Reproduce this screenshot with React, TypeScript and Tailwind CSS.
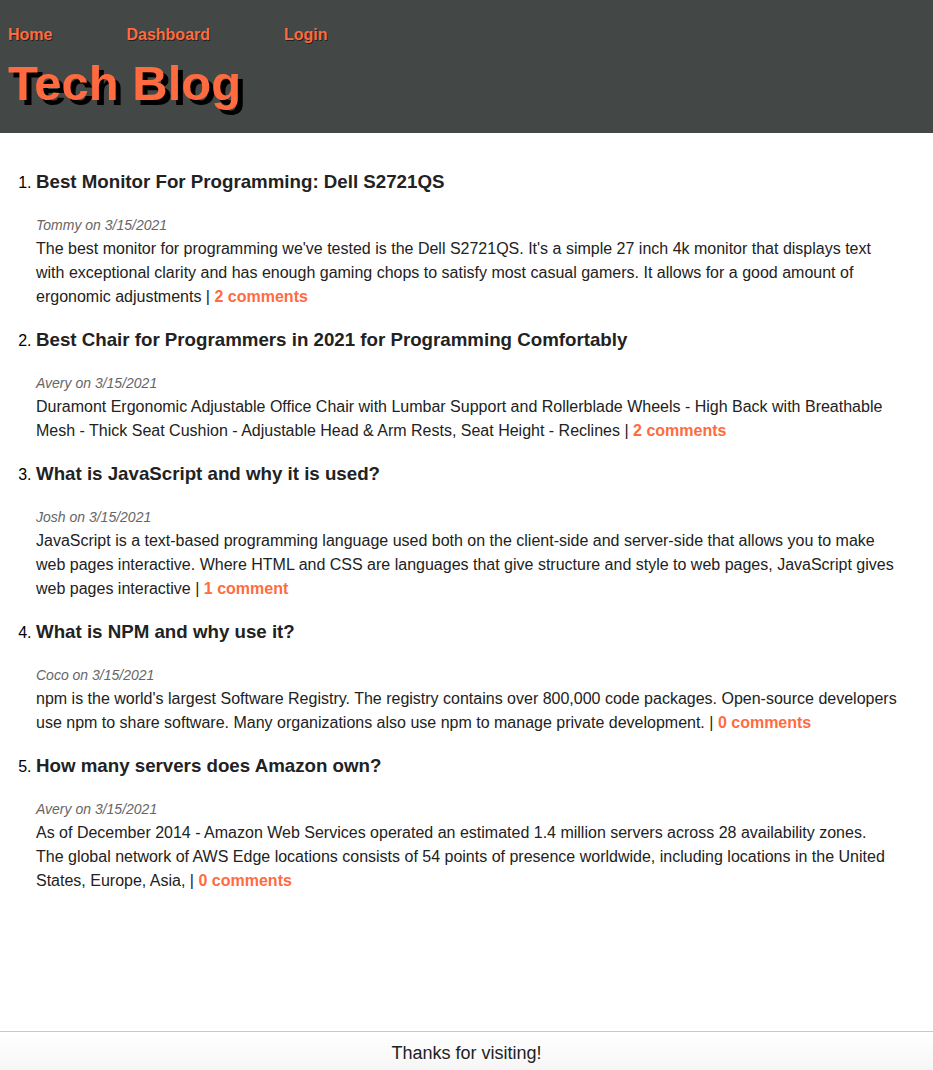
import React, { JSX } from "react";

type Post = {
  title: string;
  author: string;
  date: string;
  body: string;
  comments: number;
};

const posts: Post[] = [
  {
    title: "Best Monitor For Programming: Dell S2721QS",
    author: "Tommy",
    date: "3/15/2021",
    body: "The best monitor for programming we've tested is the Dell S2721QS. It's a simple 27 inch 4k monitor that displays text with exceptional clarity and has enough gaming chops to satisfy most casual gamers. It allows for a good amount of ergonomic adjustments",
    comments: 2,
  },
  {
    title: "Best Chair for Programmers in 2021 for Programming Comfortably",
    author: "Avery",
    date: "3/15/2021",
    body: "Duramont Ergonomic Adjustable Office Chair with Lumbar Support and Rollerblade Wheels - High Back with Breathable Mesh - Thick Seat Cushion - Adjustable Head & Arm Rests, Seat Height - Reclines",
    comments: 2,
  },
  {
    title: "What is JavaScript and why it is used?",
    author: "Josh",
    date: "3/15/2021",
    body: "JavaScript is a text-based programming language used both on the client-side and server-side that allows you to make web pages interactive. Where HTML and CSS are languages that give structure and style to web pages, JavaScript gives web pages interactive",
    comments: 1,
  },
  {
    title: "What is NPM and why use it?",
    author: "Coco",
    date: "3/15/2021",
    body: "npm is the world's largest Software Registry. The registry contains over 800,000 code packages. Open-source developers use npm to share software. Many organizations also use npm to manage private development.",
    comments: 0,
  },
  {
    title: "How many servers does Amazon own?",
    author: "Avery",
    date: "3/15/2021",
    // the reference wraps before "The"
    body: "As of December 2014 - Amazon Web Services operated an estimated 1.4 million servers across 28 availability zones.\nThe global network of AWS Edge locations consists of 54 points of presence worldwide, including locations in the United States, Europe, Asia,",
    comments: 0,
  },
];

function PostItem({ post }: { post: Post }): JSX.Element {
  return (
    <li className="mt-5 first:mt-0">
      <h3 className="text-[18.72px] leading-[22px] font-bold text-[#222] mb-[21px]">
        {post.title}
      </h3>
      <p className="text-[14px] leading-[22px] italic text-[#666] mb-px">
        {post.author} on {post.date}
      </p>
      <p className="text-base leading-6 text-[#222] whitespace-pre-line">
        {post.body} |{" "}
        <a href="#" className="font-bold text-[#ff6b3f]">
          {post.comments} {post.comments === 1 ? "comment" : "comments"}
        </a>
      </p>
    </li>
  );
}

export default function App(): JSX.Element {
  return (
    <div className="min-h-screen flex flex-col bg-white font-['Liberation_Sans',Arial,sans-serif]">
      <header className="h-[133px] bg-[#434846] px-2 pt-[26px]">
        <nav className="flex gap-[74px]">
          {["Home", "Dashboard", "Login"].map((link) => (
            <a
              key={link}
              href="#"
              className="text-base leading-[18px] font-bold text-[#ff6b3f] [text-shadow:1px_1px_0_#222]"
            >
              {link}
            </a>
          ))}
        </nav>
        <h1 className="mt-[15px] text-[49px] leading-[49px] font-bold text-[#ff6b3f] [text-shadow:5px_5px_0_#000]">
          Tech Blog
        </h1>
      </header>
      <main className="flex-1">
        <ol className="list-decimal pl-9 pr-8 pt-[38px]">
          {posts.map((post) => (
            <PostItem key={post.title} post={post} />
          ))}
        </ol>
      </main>
      <footer className="h-[39px] pt-1 border-t border-[#c8c8c8] bg-gradient-to-b from-white to-[#f6f6f6] flex items-center justify-center">
        <span className="text-[18px] text-[#222]">Thanks for visiting!</span>
      </footer>
    </div>
  );
}
